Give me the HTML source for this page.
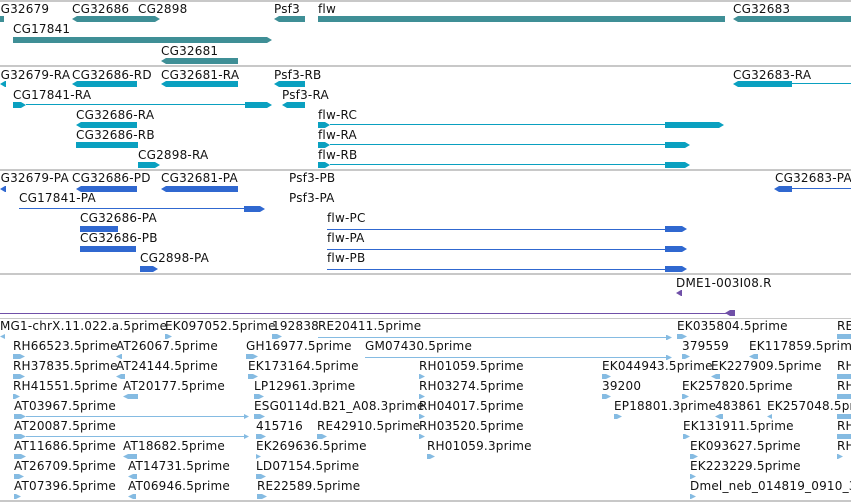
<!DOCTYPE html><html><head><meta charset="utf-8"><style>
body{margin:0;width:851px;height:502px;overflow:hidden;background:#fff;position:relative;font-family:"DejaVu Sans","Liberation Sans",sans-serif}
div{position:absolute}
.t{font-size:12px;letter-spacing:.2px;line-height:14px;color:#111;white-space:nowrap}
.b{height:6px}
.s{height:5px}
.r{clip-path:polygon(0 0,calc(100% - 5px) 0,100% 50%,calc(100% - 5px) 100%,0 100%)}
.l{clip-path:polygon(5px 0,100% 0,100% 100%,5px 100%,0 50%)}
.lr{clip-path:polygon(5px 0,calc(100% - 5px) 0,100% 50%,calc(100% - 5px) 100%,5px 100%,0 50%)}
.g{background:#3f8f96}.x{background:#0aa0c0}.p{background:#3068d0}.e{background:#85bbe2}.v{background:#7050a8}
.ln{height:1px}
.hr{left:0;width:851px;height:2px;background:#c8c8c8}
</style></head><body>
<div class="hr" style="top:0"></div>
<div class="hr" style="top:65px"></div>
<div class="hr" style="top:169px"></div>
<div class="hr" style="top:273px"></div>
<div class="hr" style="top:318px;height:1px"></div>
<div class="hr" style="top:500px"></div>

<div class="t" style="left:-8px;top:2px">CG32679</div>
<div class="t" style="left:72px;top:2px">CG32686</div>
<div class="t" style="left:138px;top:2px">CG2898</div>
<div class="t" style="left:274px;top:2px">Psf3</div>
<div class="t" style="left:318px;top:2px">flw</div>
<div class="t" style="left:733px;top:2px">CG32683</div>
<div class="b g" style="left:0;width:4px;top:16px"></div>
<div class="b g lr" style="left:72px;width:88px;top:16px"></div>
<div class="b g l" style="left:274px;width:31px;top:16px"></div>
<div class="b g" style="left:318px;width:407px;top:16px"></div>
<div class="b g l" style="left:733px;width:118px;top:16px"></div>
<div class="t" style="left:13px;top:22px">CG17841</div>
<div class="b g r" style="left:13px;width:259px;top:37px"></div>
<div class="t" style="left:161px;top:44px">CG32681</div>
<div class="b g l" style="left:161px;width:77px;top:58px"></div>

<div class="t" style="left:-8px;top:68px">CG32679-RA</div>
<div class="t" style="left:72px;top:68px">CG32686-RD</div>
<div class="t" style="left:161px;top:68px">CG32681-RA</div>
<div class="t" style="left:274px;top:68px">Psf3-RB</div>
<div class="t" style="left:733px;top:68px">CG32683-RA</div>
<div class="b x l" style="left:0;width:6px;top:81px"></div>
<div class="b x l" style="left:72px;width:65px;top:81px"></div>
<div class="b x l" style="left:161px;width:77px;top:81px"></div>
<div class="b x l" style="left:274px;width:31px;top:81px"></div>
<div class="b x l" style="left:733px;width:59px;top:81px"></div>
<div class="ln x" style="left:792px;width:59px;top:83px"></div>
<div class="t" style="left:13px;top:88px">CG17841-RA</div>
<div class="t" style="left:282px;top:88px">Psf3-RA</div>
<div class="b x r" style="left:13px;width:13px;top:102px"></div>
<div class="ln x" style="left:26px;width:222px;top:104px"></div>
<div class="b x r" style="left:245px;width:27px;top:102px"></div>
<div class="b x l" style="left:282px;width:23px;top:102px"></div>
<div class="t" style="left:76px;top:108px">CG32686-RA</div>
<div class="t" style="left:318px;top:108px">flw-RC</div>
<div class="b x l" style="left:76px;width:61px;top:122px"></div>
<div class="b x r" style="left:318px;width:12px;top:122px"></div>
<div class="ln x" style="left:330px;width:340px;top:124px"></div>
<div class="b x r" style="left:665px;width:59px;top:122px"></div>
<div class="t" style="left:76px;top:128px">CG32686-RB</div>
<div class="t" style="left:318px;top:128px">flw-RA</div>
<div class="b x" style="left:76px;width:62px;top:142px"></div>
<div class="b x r" style="left:318px;width:12px;top:142px"></div>
<div class="ln x" style="left:330px;width:340px;top:144px"></div>
<div class="b x r" style="left:665px;width:25px;top:142px"></div>
<div class="t" style="left:138px;top:148px">CG2898-RA</div>
<div class="t" style="left:318px;top:148px">flw-RB</div>
<div class="b x r" style="left:138px;width:22px;top:162px"></div>
<div class="b x r" style="left:318px;width:12px;top:162px"></div>
<div class="ln x" style="left:330px;width:340px;top:164px"></div>
<div class="b x r" style="left:665px;width:25px;top:162px"></div>

<div class="t" style="left:-8px;top:171px">CG32679-PA</div>
<div class="t" style="left:72px;top:171px">CG32686-PD</div>
<div class="t" style="left:161px;top:171px">CG32681-PA</div>
<div class="t" style="left:289px;top:171px">Psf3-PB</div>
<div class="t" style="left:775px;top:171px">CG32683-PA</div>
<div class="b p l" style="left:0;width:6px;top:186px"></div>
<div class="b p l" style="left:76px;width:61px;top:186px"></div>
<div class="b p l" style="left:161px;width:77px;top:186px"></div>
<div class="b p l" style="left:774px;width:18px;top:186px"></div>
<div class="ln p" style="left:792px;width:59px;top:188px"></div>
<div class="t" style="left:19px;top:191px">CG17841-PA</div>
<div class="t" style="left:289px;top:191px">Psf3-PA</div>
<div class="ln p" style="left:19px;width:226px;top:208px"></div>
<div class="b p r" style="left:244px;width:21px;top:206px"></div>
<div class="t" style="left:80px;top:211px">CG32686-PA</div>
<div class="t" style="left:327px;top:211px">flw-PC</div>
<div class="b p" style="left:80px;width:38px;top:226px"></div>
<div class="ln p" style="left:327px;width:340px;top:229px"></div>
<div class="b p r" style="left:665px;width:22px;top:226px"></div>
<div class="t" style="left:80px;top:231px">CG32686-PB</div>
<div class="t" style="left:327px;top:231px">flw-PA</div>
<div class="b p" style="left:80px;width:56px;top:246px"></div>
<div class="ln p" style="left:327px;width:340px;top:249px"></div>
<div class="b p r" style="left:665px;width:22px;top:246px"></div>
<div class="t" style="left:140px;top:251px">CG2898-PA</div>
<div class="t" style="left:327px;top:251px">flw-PB</div>
<div class="b p r" style="left:140px;width:18px;top:266px"></div>
<div class="ln p" style="left:327px;width:340px;top:269px"></div>
<div class="b p r" style="left:665px;width:22px;top:266px"></div>

<div class="t" style="left:676px;top:276px">DME1-003I08.R</div>
<div class="b v l" style="left:676px;width:6px;top:290px"></div>
<div class="ln v" style="left:0;width:730px;top:313px"></div>
<div class="b v l" style="left:725px;width:10px;top:310px"></div>

<div class="t" style="left:0;top:319px">MG1-chrX.11.022.a.5prime</div>
<div class="t" style="left:165px;top:319px">EK097052.5prime</div>
<div class="t" style="left:272px;top:319px">192838</div>
<div class="t" style="left:318px;top:319px">RE20411.5prime</div>
<div class="t" style="left:677px;top:319px">EK035804.5prime</div>
<div class="t" style="left:837px;top:319px">RE</div>
<div class="s e l" style="left:0;width:5px;top:334px"></div>
<div class="s e r" style="left:165px;width:7px;top:334px"></div>
<div class="s e r" style="left:272px;width:10px;top:334px"></div>
<div class="ln e" style="left:318px;width:352px;top:337px"></div>
<div class="s e r" style="left:666px;width:6px;top:335px"></div>
<div class="s e r" style="left:677px;width:10px;top:334px"></div>
<div class="s e" style="left:837px;width:14px;top:334px"></div>

<div class="t" style="left:13px;top:339px">RH66523.5prime</div>
<div class="t" style="left:116px;top:339px">AT26067.5prime</div>
<div class="t" style="left:246px;top:339px">GH16977.5prime</div>
<div class="t" style="left:365px;top:339px">GM07430.5prime</div>
<div class="t" style="left:682px;top:339px">379559</div>
<div class="t" style="left:749px;top:339px">EK117859.5prime</div>
<div class="s e r" style="left:13px;width:12px;top:354px"></div>
<div class="s e l" style="left:116px;width:6px;top:354px"></div>
<div class="s e r" style="left:246px;width:12px;top:354px"></div>
<div class="ln e" style="left:365px;width:305px;top:357px"></div>
<div class="s e r" style="left:666px;width:6px;top:355px"></div>
<div class="s e r" style="left:682px;width:8px;top:354px"></div>
<div class="s e l" style="left:749px;width:9px;top:354px"></div>

<div class="t" style="left:13px;top:359px">RH37835.5prime</div>
<div class="t" style="left:116px;top:359px">AT24144.5prime</div>
<div class="t" style="left:248px;top:359px">EK173164.5prime</div>
<div class="t" style="left:419px;top:359px">RH01059.5prime</div>
<div class="t" style="left:602px;top:359px">EK044943.5prime</div>
<div class="t" style="left:711px;top:359px">EK227909.5prime</div>
<div class="t" style="left:837px;top:359px">RH</div>
<div class="s e r" style="left:13px;width:12px;top:374px"></div>
<div class="s e l" style="left:116px;width:9px;top:374px"></div>
<div class="s e r" style="left:248px;width:10px;top:374px"></div>
<div class="s e r" style="left:419px;width:6px;top:374px"></div>
<div class="s e r" style="left:602px;width:9px;top:374px"></div>
<div class="s e l" style="left:711px;width:9px;top:374px"></div>
<div class="s e" style="left:837px;width:14px;top:374px"></div>

<div class="t" style="left:13px;top:379px">RH41551.5prime</div>
<div class="t" style="left:123px;top:379px">AT20177.5prime</div>
<div class="t" style="left:254px;top:379px">LP12961.3prime</div>
<div class="t" style="left:419px;top:379px">RH03274.5prime</div>
<div class="t" style="left:602px;top:379px">39200</div>
<div class="t" style="left:682px;top:379px">EK257820.5prime</div>
<div class="t" style="left:837px;top:379px">RH</div>
<div class="s e r" style="left:13px;width:7px;top:394px"></div>
<div class="s e l" style="left:123px;width:15px;top:394px"></div>
<div class="s e r" style="left:254px;width:10px;top:394px"></div>
<div class="s e r" style="left:419px;width:6px;top:394px"></div>
<div class="s e r" style="left:602px;width:9px;top:394px"></div>
<div class="s e r" style="left:682px;width:7px;top:394px"></div>
<div class="s e" style="left:837px;width:14px;top:394px"></div>

<div class="t" style="left:14px;top:399px">AT03967.5prime</div>
<div class="t" style="left:254px;top:399px">ESG0114d.B21_A08.3prime</div>
<div class="t" style="left:419px;top:399px">RH04017.5prime</div>
<div class="t" style="left:614px;top:399px">EP18801.3prime</div>
<div class="t" style="left:715px;top:399px">483861</div>
<div class="t" style="left:767px;top:399px">EK257048.5prime</div>
<div class="s e r" style="left:14px;width:12px;top:414px"></div>
<div class="ln e" style="left:26px;width:218px;top:416px"></div>
<div class="s e r" style="left:244px;width:5px;top:414px"></div>
<div class="s e r" style="left:254px;width:11px;top:414px"></div>
<div class="s e r" style="left:419px;width:6px;top:414px"></div>
<div class="s e r" style="left:614px;width:8px;top:414px"></div>
<div class="s e l" style="left:715px;width:8px;top:414px"></div>
<div class="s e l" style="left:767px;width:5px;top:414px"></div>
<div class="s e" style="left:837px;width:14px;top:414px"></div>

<div class="t" style="left:14px;top:419px">AT20087.5prime</div>
<div class="t" style="left:256px;top:419px">415716</div>
<div class="t" style="left:317px;top:419px">RE42910.5prime</div>
<div class="t" style="left:419px;top:419px">RH03520.5prime</div>
<div class="t" style="left:683px;top:419px">EK131911.5prime</div>
<div class="t" style="left:837px;top:419px">RH</div>
<div class="s e r" style="left:14px;width:12px;top:434px"></div>
<div class="ln e" style="left:26px;width:218px;top:436px"></div>
<div class="s e r" style="left:244px;width:5px;top:434px"></div>
<div class="s e r" style="left:256px;width:10px;top:434px"></div>
<div class="s e r" style="left:317px;width:10px;top:434px"></div>
<div class="s e r" style="left:419px;width:6px;top:434px"></div>
<div class="s e r" style="left:683px;width:7px;top:434px"></div>
<div class="s e" style="left:837px;width:14px;top:434px"></div>

<div class="t" style="left:14px;top:439px">AT11686.5prime</div>
<div class="t" style="left:123px;top:439px">AT18682.5prime</div>
<div class="t" style="left:256px;top:439px">EK269636.5prime</div>
<div class="t" style="left:427px;top:439px">RH01059.3prime</div>
<div class="t" style="left:690px;top:439px">EK093627.5prime</div>
<div class="t" style="left:837px;top:439px">RH</div>
<div class="s e r" style="left:14px;width:12px;top:454px"></div>
<div class="s e l" style="left:123px;width:14px;top:454px"></div>
<div class="s e r" style="left:256px;width:5px;top:454px"></div>
<div class="s e r" style="left:427px;width:8px;top:454px"></div>
<div class="s e r" style="left:690px;width:8px;top:454px"></div>
<div class="s e r" style="left:837px;width:6px;top:454px"></div>

<div class="t" style="left:14px;top:459px">AT26709.5prime</div>
<div class="t" style="left:128px;top:459px">AT14731.5prime</div>
<div class="t" style="left:256px;top:459px">LD07154.5prime</div>
<div class="t" style="left:690px;top:459px">EK223229.5prime</div>
<div class="s e r" style="left:14px;width:10px;top:474px"></div>
<div class="s e l" style="left:128px;width:9px;top:474px"></div>
<div class="s e r" style="left:256px;width:10px;top:474px"></div>
<div class="s e r" style="left:690px;width:6px;top:474px"></div>

<div class="t" style="left:14px;top:479px">AT07396.5prime</div>
<div class="t" style="left:128px;top:479px">AT06946.5prime</div>
<div class="t" style="left:257px;top:479px">RE22589.5prime</div>
<div class="t" style="left:690px;top:479px">Dmel_neb_014819_0910_3</div>
<div class="s e r" style="left:14px;width:7px;top:494px"></div>
<div class="s e l" style="left:128px;width:8px;top:494px"></div>
<div class="s e r" style="left:257px;width:10px;top:494px"></div>
<div class="s e r" style="left:690px;width:6px;top:494px"></div>
</body></html>
